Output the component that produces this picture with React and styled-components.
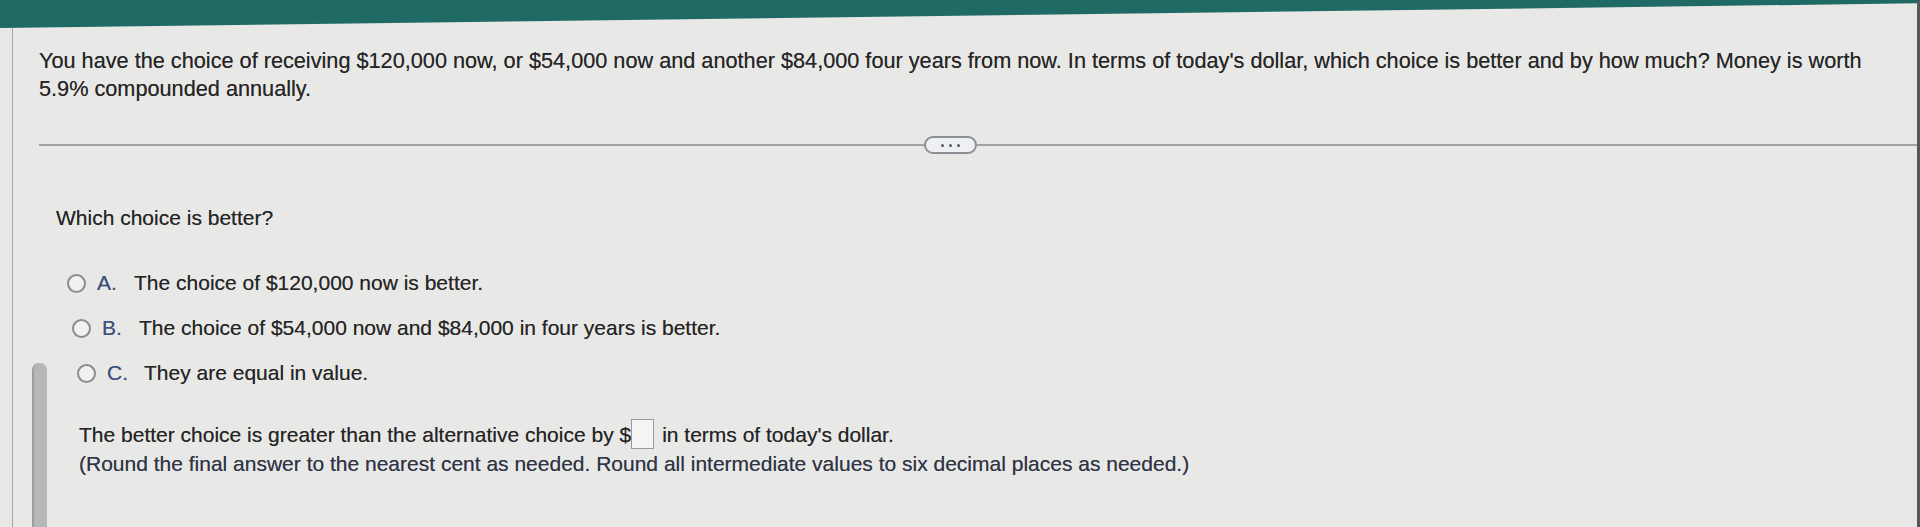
import React from "react";
import styled, { createGlobalStyle } from "styled-components";

const GlobalStyle = createGlobalStyle`
  html, body {
    margin: 0;
    padding: 0;
    background: #e8e8e6;
  }
  * {
    box-sizing: border-box;
  }
`;

const options = [
  { letter: "A.", text: "The choice of $120,000 now is better.", indent: 68 },
  {
    letter: "B.",
    text: "The choice of $54,000 now and $84,000 in four years is better.",
    indent: 73,
  },
  { letter: "C.", text: "They are equal in value.", indent: 78 },
];

const App = () => {
  return (
    <>
      <GlobalStyle />
      <Page>
        <Header />
        <Body>
          <Rail />
          <Content>
            <Question>
              You have the choice of receiving $120,000 now, or $54,000 now and
              another $84,000 four years from now. In terms of today's dollar,
              which choice is better and by how much? Money is worth 5.9%
              compounded annually.
            </Question>

            <Divider>
              <Rule $width={885} />
              <MoreButton>
                <Dot />
                <Dot />
                <Dot />
              </MoreButton>
              <Rule />
            </Divider>

            <Prompt>Which choice is better?</Prompt>

            <OptionList>
              {options.map((opt) => (
                <Option key={opt.letter} $indent={opt.indent}>
                  <Radio />
                  <Letter>{opt.letter}</Letter>
                  <span>{opt.text}</span>
                </Option>
              ))}
            </OptionList>

            <Answer>
              <AnswerLine>
                The better choice is greater than the alternative choice by $
                <AnswerBox />
                in terms of today's dollar.
              </AnswerLine>
              <Hint>
                (Round the final answer to the nearest cent as needed. Round
                all intermediate values to six decimal places as needed.)
              </Hint>
            </Answer>
          </Content>
          <ScrollThumb />
        </Body>
      </Page>
    </>
  );
};

const Page = styled.div`
  width: 1920px;
  height: 527px;
  overflow: hidden;
  display: flex;
  flex-direction: column;
  background: #e8e8e6;
  border-right: 3px solid #55585a;
  font-family: "Liberation Sans", Arial, sans-serif;
  color: #262626;
`;

const Header = styled.div`
  height: 28px;
  flex-shrink: 0;
  background: #1f6a65;
  clip-path: polygon(0 0, 100% 0, 100% 12%, 0 100%);
`;

const Body = styled.div`
  position: relative;
  flex: 1;
  display: flex;
`;

const Rail = styled.div`
  width: 13px;
  flex-shrink: 0;
  border-right: 1px solid #a8a8a8;
`;

const Content = styled.div`
  flex: 1;
  display: flex;
  flex-direction: column;
  padding: 19px 0 0 26px;
  font-size: 21px;
  text-shadow: 0 0 0.5px rgba(30, 30, 30, 0.6);
`;

const Question = styled.p`
  margin: 0;
  width: 1835px;
  font-size: 21.7px;
  line-height: 28px;
`;

const Divider = styled.div`
  display: flex;
  align-items: center;
  margin-top: 33px;
  height: 18px;
`;

const Rule = styled.div`
  height: 2px;
  background: #a2a3a3;
  flex: ${(p) => (p.$width ? `0 0 ${p.$width}px` : "1")};
`;

const MoreButton = styled.div`
  width: 53px;
  height: 18px;
  border: 2px solid #8c8f93;
  border-radius: 9px;
  background: #eef0f4;
  display: flex;
  align-items: center;
  justify-content: center;
  gap: 5px;
`;

const Dot = styled.span`
  width: 3px;
  height: 3px;
  border-radius: 50%;
  background: #5a5d63;
`;

const Prompt = styled.div`
  margin-top: 50px;
  padding-left: 17px;
  line-height: 28px;
`;

const OptionList = styled.div`
  display: flex;
  flex-direction: column;
  gap: 17px;
  margin-top: 37px;
`;

const Option = styled.div`
  display: flex;
  align-items: center;
  height: 28px;
  padding-left: ${(p) => p.$indent - 40}px;
`;

const Radio = styled.span`
  width: 19px;
  height: 19px;
  border-radius: 50%;
  border: 2px solid #8b8b8b;
  background: #f1f1f1;
  flex-shrink: 0;
  margin-right: 11px;
`;

const Letter = styled.span`
  width: 37px;
  color: #3d5283;
`;

const Answer = styled.div`
  margin-top: 32px;
  padding-left: 40px;
  line-height: 29px;
`;

const AnswerLine = styled.div`
  display: flex;
  align-items: center;
  white-space: pre;
`;

const AnswerBox = styled.span`
  display: inline-block;
  width: 23px;
  height: 30px;
  margin: 0 8px 0 0;
  border: 1px solid #9a9a9a;
  background: #f4f4f4;
`;

const Hint = styled.div`
  color: #2f3547;
`;

const ScrollThumb = styled.div`
  position: absolute;
  left: 32px;
  top: 335px;
  bottom: 0;
  width: 15px;
  border-radius: 7px 7px 0 0;
  background: #b6b7b7;
  border-left: 2px solid #9c9d9d;
`;

export default App;
